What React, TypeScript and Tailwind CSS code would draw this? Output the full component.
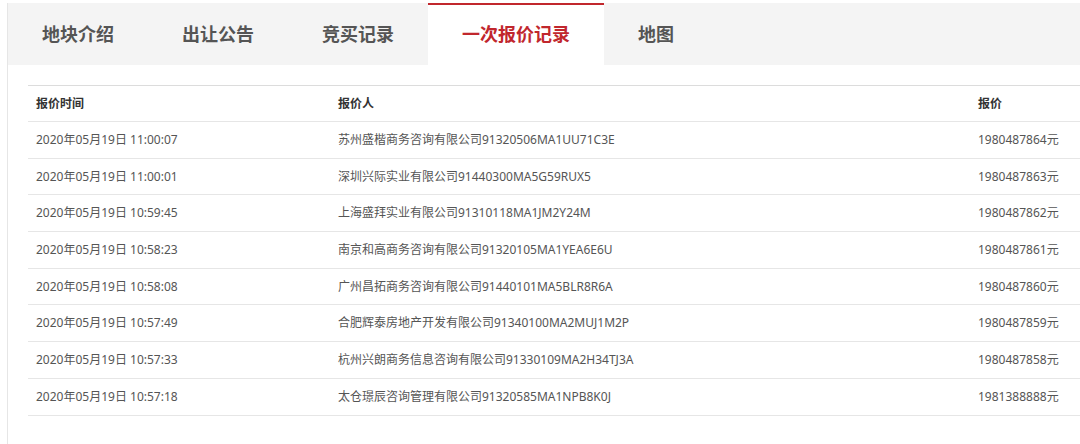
const tabs = ["地块介绍", "出让公告", "竞买记录", "一次报价记录", "地图"];
const active = 3;

const rows = [
  ["2020年05月19日 11:00:07", "苏州盛楷商务咨询有限公司91320506MA1UU71C3E", "1980487864元"],
  ["2020年05月19日 11:00:01", "深圳兴际实业有限公司91440300MA5G59RUX5", "1980487863元"],
  ["2020年05月19日 10:59:45", "上海盛拜实业有限公司91310118MA1JM2Y24M", "1980487862元"],
  ["2020年05月19日 10:58:23", "南京和高商务咨询有限公司91320105MA1YEA6E6U", "1980487861元"],
  ["2020年05月19日 10:58:08", "广州昌拓商务咨询有限公司91440101MA5BLR8R6A", "1980487860元"],
  ["2020年05月19日 10:57:49", "合肥辉泰房地产开发有限公司91340100MA2MUJ1M2P", "1980487859元"],
  ["2020年05月19日 10:57:33", "杭州兴朗商务信息咨询有限公司91330109MA2H34TJ3A", "1980487858元"],
  ["2020年05月19日 10:57:18", "太仓璟辰咨询管理有限公司91320585MA1NPB8K0J", "1981388888元"],
];

export default function App() {
  return (
    <div
      className="h-[444px] w-[1080px] overflow-hidden bg-white pl-[7px] pt-[3px]"
      style={{ fontFamily: '"Noto Sans", "Noto Sans CJK SC", sans-serif' }}
    >
      <div className="h-full border-l border-[#e6e6e6]">
        {/* tab bar */}
        <div className="flex h-[62px] bg-[#f4f4f4]">
          {tabs.map((t, i) => (
            <div
              key={t}
              className={
                i === active
                  ? "flex items-center border-t-2 border-[#c1272d] bg-white px-[34px] pb-[2px] text-[18px] font-bold text-[#c1272d]"
                  : "flex items-center px-[34px] text-[18px] font-bold text-[#555]"
              }
            >
              {t}
            </div>
          ))}
        </div>

        {/* table */}
        <div className="pl-[20px] pt-[20px]">
          <div className="border-t border-[#dcdcdc] text-[12px]">
            <div className="flex h-[36px] items-center border-b border-[#e6e6e6] font-bold text-[#333]">
              <div className="w-[310px] pl-[8px]">报价时间</div>
              <div className="w-[640px] pl-[0px]">报价人</div>
              <div className="flex-1">报价</div>
            </div>
            {rows.map((r) => (
              <div
                key={r[0]}
                className="flex h-[36.7px] items-center border-b border-[#e6e6e6] text-[#555]"
              >
                <div className="w-[310px] pl-[8px]">{r[0]}</div>
                <div className="w-[640px]">{r[1]}</div>
                <div className="flex-1">{r[2]}</div>
              </div>
            ))}
          </div>
        </div>
      </div>
    </div>
  );
}
